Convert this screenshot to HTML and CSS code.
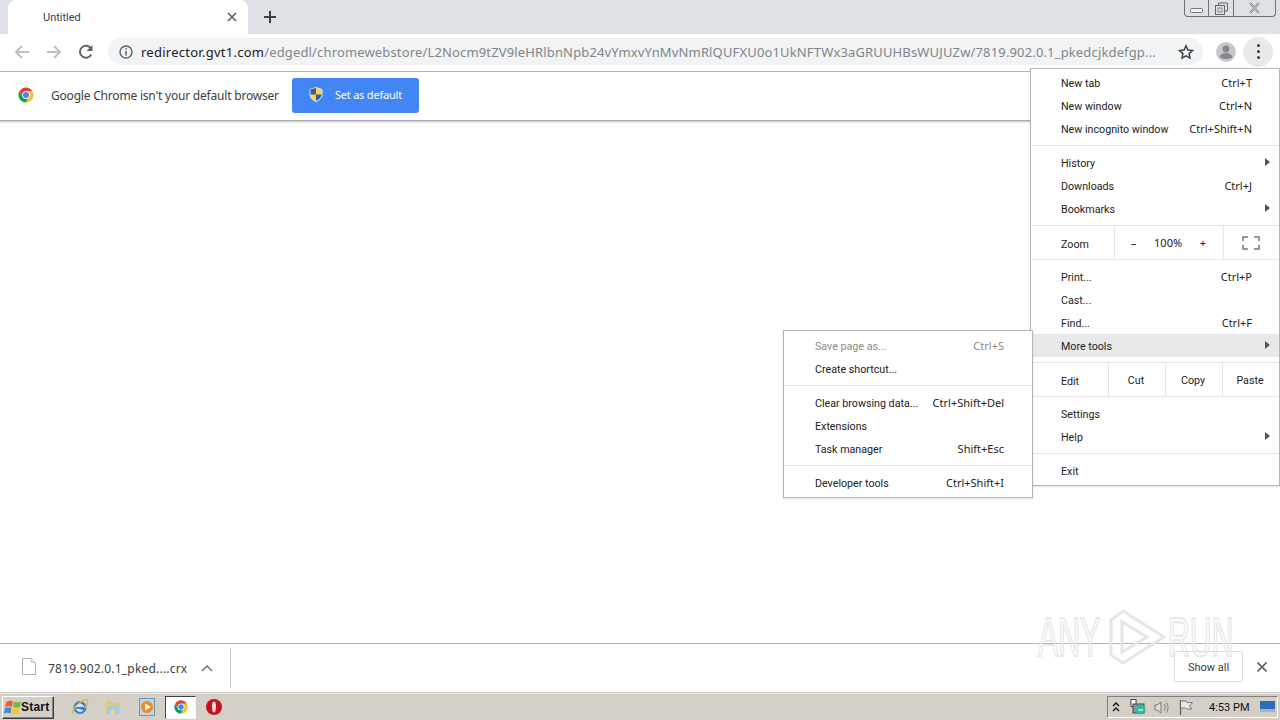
FILE: index.html
```html
<!DOCTYPE html>
<html lang="en">
<head>
<meta charset="utf-8">
<title>Untitled</title>
<link rel="stylesheet" href="styles.css">
</head>
<body>
<svg class="defs" width="0" height="0" aria-hidden="true">
  <symbol id="chrome" viewBox="0 0 48 48">
    <path fill="#db4437" d="M6.680 14A20 20 0 0 1 41.320 14H24A10 10 0 0 0 15.340 29z"/>
    <path fill="#0f9d58" d="M24 44A20 20 0 0 1 6.680 14L15.340 29A10 10 0 0 0 32.660 29z"/>
    <path fill="#fbc02d" d="M41.320 14A20 20 0 0 1 24 44L32.660 29A10 10 0 0 0 24 14z"/>
    <circle cx="24" cy="24" r="10" fill="#fff"/>
    <circle cx="24" cy="24" r="8" fill="#4285f4"/>
  </symbol>
</svg>
<div class="screen">
  <header class="tabstrip">
    <div class="tab">
      <span class="tab-title">Untitled</span>
      <svg class="tab-close" width="10" height="10" viewBox="0 0 10 10"><path d="M1 1l8 8M9 1l-8 8" stroke="#5f6368" stroke-width="1.700" fill="none"/></svg>
    </div>
    <svg class="new-tab" width="14" height="14" viewBox="0 0 14 14"><path d="M7 1v12M1 7h12" stroke="#3c4043" stroke-width="2" fill="none"/></svg>
    <div class="winctl">
      <span class="winbtn win-min"><svg width="13" height="5" viewBox="0 0 13 5"><rect x="0.500" y="0.500" width="12" height="4" rx="1" fill="#eef0f3" stroke="#777"/></svg></span>
      <span class="winbtn win-max"><svg width="13" height="13" viewBox="0 0 13 13"><path d="M3.500 3V1h9v8h-2.500" fill="none" stroke="#666"/><rect x="0.500" y="3.500" width="9" height="9" fill="none" stroke="#666"/><rect x="3" y="6" width="4" height="4" fill="none" stroke="#888"/></svg></span>
      <span class="winbtn win-close"><svg width="13" height="12" viewBox="0 0 13 12"><path d="M2 1l9 10M11 1L2 11" stroke="#888" stroke-width="2.400" fill="none"/><path d="M2 1l9 10M11 1L2 11" stroke="#e8eaed" stroke-width="0.800" fill="none"/></svg></span>
    </div>
  </header>

  <nav class="toolbar">
    <svg class="tool-icon" width="16" height="16" viewBox="0 0 16 16"><path d="M15 8H2M8 2L2 8l6 6" stroke="#bdc1c6" stroke-width="2" fill="none"/></svg>
    <svg class="tool-icon" width="16" height="16" viewBox="0 0 16 16"><path d="M1 8h13M8 2l6 6-6 6" stroke="#bdc1c6" stroke-width="2" fill="none"/></svg>
    <svg class="tool-icon" width="16" height="16" viewBox="0 0 16 16"><path d="M13.300 10.500A6 6 0 1 1 13 4.500" stroke="#5f6368" stroke-width="2" fill="none"/><path d="M14.500 1v6h-6z" fill="#5f6368"/></svg>
    <div class="omnibox">
      <svg class="info" width="14" height="14" viewBox="0 0 14 14"><circle cx="7" cy="7" r="6" fill="none" stroke="#5f6368" stroke-width="1.400"/><path d="M7 6v4.500M7 3.300v1.500" stroke="#5f6368" stroke-width="1.500"/></svg>
      <div class="url"><span class="host">redirector.gvt1.com</span>/edgedl/chromewebstore/L2Nocm9tZV9leHRlbnNpb24vYmxvYnMvNmRlQUFXU0o1UkNFTWx3aGRUUHBsWUJUZw/7819.902.0.1_pkedcjkdefgp...</div>
      <svg class="star" width="16" height="16" viewBox="0 0 16 16"><path d="M8 1.800l1.900 4.200 4.600.5-3.400 3.100.9 4.500L8 11.800l-4 2.300.9-4.500-3.400-3.100 4.600-.5z" fill="none" stroke="#3c4043" stroke-width="1.500"/></svg>
    </div>
    <svg class="avatar" width="20" height="20" viewBox="0 0 20 20"><circle cx="10" cy="10" r="10" fill="#c6c8cb"/><circle cx="10" cy="7" r="3.400" fill="#84878b"/><path d="M3.500 15c1-3 4-4 6.500-4s5.500 1 6.500 4c-1.500 1.500-4 2-6.500 2s-5-.5-6.500-2z" fill="#84878b"/></svg>
    <div class="menu-btn"><i></i><i></i><i></i></div>
  </nav>

  <section class="infobar">
    <svg class="info-logo" width="18" height="18"><use href="#chrome"/></svg>
    <span class="info-text">Google Chrome isn't your default browser</span>
    <button class="default-btn">
      <svg width="14" height="15" viewBox="0 0 14 15"><path d="M7 0.500l6 2v5c0 3.500-3 5.800-6 7-3-1.200-6-3.500-6-7v-5z" fill="#ffd23f" stroke="#dfe8f7"/><path d="M7 1v6.500H1.500v-5zM7 7.500h5.500c0 3-2.700 5.200-5.500 6.400z" fill="#2a5fb0"/></svg>
      <span>Set as default</span>
    </button>
  </section>

  <main class="content"></main>

  <section class="downloads">
    <div class="dl-item">
      <svg class="dl-file" width="14" height="17" viewBox="0 0 14 17"><path d="M.5.500h9l4 4v12H.5z" fill="#fff" stroke="#aeb1b5"/><path d="M9.500.500v4h4" fill="#eee" stroke="#c6c8ca"/></svg>
      <span class="dl-name">7819.902.0.1_pked....crx</span>
      <svg width="12" height="7" viewBox="0 0 12 7"><path d="M1 6l5-5 5 5" fill="none" stroke="#777" stroke-width="1.600"/></svg>
    </div>
    <button class="show-all">Show all</button>
    <svg class="dl-close" width="10" height="10" viewBox="0 0 10 10"><path d="M0.500.500l9 9M9.500.500l-9 9" stroke="#5f6368" stroke-width="1.600" fill="none"/></svg>
  </section>

  <footer class="taskbar">
    <button class="start">
      <svg width="17" height="15" viewBox="0 0 17 15"><path d="M2 2.500c2-2 5-2 7-1L8 7C6 6 4 6 1 7z" fill="#e8622c"/><path d="M10 1.500c2 1 4 1 7 0l-1 5.500c-3 1-5 1-7 0z" fill="#79b83d"/><path d="M1 8c2-1 4-1 6.500 0l-1 5.500C4 12.500 3 12.500 0 13.500z" fill="#3e8be0"/><path d="M8.500 8c2 1 4 1 7 0l-1 5.500c-3 1-5 1-7 0z" fill="#f8c52c"/></svg>
      <span>Start</span>
    </button>
    <div class="quick">
      <svg class="q-ie" width="18" height="18" viewBox="0 0 18 18"><circle cx="9" cy="9.500" r="6.500" fill="#2f7fd1"/><path d="M5.500 8.600h7c-.5-3.400-6.400-3.400-7 0zM5.500 10.600c.6 3.500 5 3.900 6.800 1.400" fill="#d7ecfb" stroke="#d7ecfb" stroke-width="0.900"/><path d="M3 15.500C.5 15 3 9 7.500 5.500S15 .5 16.300 2c1.500 2-1 6-3 8" fill="none" stroke="#e6b73a" stroke-width="1.500"/></svg>
      <svg class="q-folder" width="16" height="16" viewBox="0 0 16 16"><path d="M1 2h6l1 2h7v11H1z" fill="#e9c867"/><path d="M2 7h12v8H2z" fill="#9fd0e6"/><path d="M6 15v-4h4v4" fill="#e9d896"/></svg>
      <svg class="q-media" width="16" height="18" viewBox="0 0 16 18"><rect x=".5" y=".5" width="15" height="17" fill="#bcd3ea" stroke="#6f97bd"/><circle cx="8" cy="9" r="6" fill="#f08a1d"/><path d="M6 5.500v7l6-3.500z" fill="#fff"/></svg>
      <div class="q-chrome"><svg width="16" height="16"><use href="#chrome"/></svg></div>
      <svg class="q-opera" width="16" height="16" viewBox="0 0 16 16"><circle cx="8" cy="8" r="8" fill="#c2121a"/><ellipse cx="8" cy="8" rx="2" ry="5.400" fill="#f6dcdc"/></svg>
    </div>
    <div class="tray">
      <svg width="8" height="10" viewBox="0 0 8 10"><path d="M1 4l3-3 3 3M1 9l3-3 3 3" fill="none" stroke="#111" stroke-width="1.400"/></svg>
      <svg class="t-net" width="16" height="16" viewBox="0 0 16 16"><rect x="1" y="0.500" width="5" height="7" fill="#fff" stroke="#444"/><rect x="3" y="5" width="11" height="9" fill="#7f9aa8" stroke="#444"/><circle cx="10.500" cy="10.500" r="5" fill="#37b7a0"/><path d="M8 11h5" stroke="#fff"/></svg>
      <svg class="t-vol" width="16" height="15" viewBox="0 0 16 15"><path d="M1 5h2l4-3v11l-4-3H1z" fill="#ddd" stroke="#777"/><path d="M10 4c1.500 2 1.500 5 0 7M12.500 2.500c2 3 2 7 0 10" fill="none" stroke="#777"/></svg>
      <svg class="t-flag" width="16" height="16" viewBox="0 0 16 16"><path d="M2.500 1v15" stroke="#666" stroke-width="1.400"/><path d="M3 2h5l1 1.500h5.500L11.500 7 14 10H8.500L7.500 9H3" fill="#e9e7e1" stroke="#777"/></svg>
      <span class="clock">4:53 PM</span>
      <svg class="t-desk" width="15" height="12" viewBox="0 0 15 12"><rect width="15" height="10" fill="#2e6dbb"/><rect y="8" width="15" height="3" fill="#9cb3c9"/></svg>
    </div>
  </footer>

  <div class="menu menu-main">
    <div class="row"><span>New tab</span><kbd>Ctrl+T</kbd></div>
    <div class="row"><span>New window</span><kbd>Ctrl+N</kbd></div>
    <div class="row"><span>New incognito window</span><kbd>Ctrl+Shift+N</kbd></div>
    <hr>
    <div class="row sub"><span>History</span></div>
    <div class="row"><span>Downloads</span><kbd>Ctrl+J</kbd></div>
    <div class="row sub"><span>Bookmarks</span></div>
    <div class="cells zoom-row">
      <span class="cell-label">Zoom</span>
      <div class="zoom-ctl"><span>&#8211;</span><span>100%</span><span>+</span></div>
      <div class="zoom-full"><svg width="18" height="14" viewBox="0 0 18 14"><path d="M1 5V1h5M12 1h5v4M17 9v4h-5M6 13H1V9" fill="none" stroke="#777" stroke-width="1.500"/></svg></div>
    </div>
    <div class="row first-after"><span>Print...</span><kbd>Ctrl+P</kbd></div>
    <div class="row"><span>Cast...</span></div>
    <div class="row"><span>Find...</span><kbd>Ctrl+F</kbd></div>
    <div class="row sub active"><span>More tools</span></div>
    <div class="cells edit-row">
      <span class="cell-label edit-label">Edit</span>
      <span class="edit-cell">Cut</span><span class="edit-cell">Copy</span><span class="edit-cell">Paste</span>
    </div>
    <div class="row first-after"><span>Settings</span></div>
    <div class="row sub"><span>Help</span></div>
    <hr>
    <div class="row"><span>Exit</span></div>
  </div>

  <div class="menu menu-sub">
    <div class="row disabled"><span>Save page as...</span><kbd>Ctrl+S</kbd></div>
    <div class="row"><span>Create shortcut...</span></div>
    <hr>
    <div class="row"><span>Clear browsing data...</span><kbd>Ctrl+Shift+Del</kbd></div>
    <div class="row"><span>Extensions</span></div>
    <div class="row"><span>Task manager</span><kbd>Shift+Esc</kbd></div>
    <hr>
    <div class="row"><span>Developer tools</span><kbd>Ctrl+Shift+I</kbd></div>
  </div>

  <div class="watermark">
    <span class="wm-text">ANY</span>
    <svg width="58" height="58" viewBox="0 0 58 58"><path d="M3 12L15 3l41 26-41 26-12-8V12zM14 14v30l25-15z" fill="none" stroke="#e6e6e6" stroke-width="3"/></svg>
    <span class="wm-text">RUN</span>
  </div>
</div>
</body>
</html>
```
FILE: styles.css
```css
* { box-sizing: border-box; }
html, body { margin: 0; height: 100%; }
body { font-family: Roboto, "Liberation Sans", sans-serif; font-size: 11px; color: #222; background: #fff; }
.defs { position: absolute; }
.screen { position: relative; width: 1280px; height: 720px; overflow: hidden; display: flex; flex-direction: column; }

.tabstrip { height: 34px; flex: none; background: #dee1e6; display: flex; align-items: flex-start; padding-left: 8px; }
.tab { width: 240px; height: 34px; background: #fff; border-radius: 8px 8px 0 0; display: flex; align-items: center; padding: 0 11px 0 35px; justify-content: space-between; }
.tab-title { font-size: 11px; color: #3c4043; }
.tab-close { display: block; }
.new-tab { margin: 10px 0 0 15px; }
.winctl { margin-left: auto; margin-right: 4px; width: 92px; height: 17px; border: 1px solid #6f7378; border-top: 0; border-radius: 0 0 4px 4px; display: flex; }
.winbtn { display: flex; align-items: center; justify-content: center; height: 16px; }
.win-min { width: 24px; border-right: 1px solid #6f7378; padding-top: 5px; }
.win-max { width: 25px; border-right: 1px solid #6f7378; }
.win-close { flex: 1; }

.toolbar { height: 38px; flex: none; background: #fff; border-bottom: 1px solid #b4b6b8; display: flex; align-items: center; padding: 0 7px 2px 14px; }
.tool-icon { margin-right: 16px; flex: none; }
.omnibox { width: 1095px; height: 27px; margin-left: -2px; border-radius: 14px; background: #f1f3f4; display: flex; align-items: center; padding: 0 9px 0 11px; }
.info { flex: none; }
.url { margin-left: 8px; width: 1018px; white-space: nowrap; overflow: hidden; font-family: "Noto Sans", sans-serif; font-size: 13px; color: #80868b; letter-spacing: 0.15px; }
.host { color: #202124; letter-spacing: 0.26px; }
.star { margin-left: auto; flex: none; }
.avatar { margin-left: 13px; flex: none; }
.menu-btn { width: 30px; height: 30px; margin-left: 7px; border-radius: 50%; background: #e8e9ea; display: flex; flex-direction: column; align-items: center; justify-content: center; gap: 3px; flex: none; }
.menu-btn i { width: 3px; height: 3px; border-radius: 50%; background: #3c4043; }

.infobar { height: 49px; flex: none; background: #fff; border-bottom: 1px solid #a9abad; box-shadow: 0 1px 2px rgba(0,0,0,.25); display: flex; align-items: center; padding: 0 0 2px 17px; position: relative; }
.info-logo { flex: none; }
.info-text { margin-left: 16px; font-family: "Noto Sans", sans-serif; font-size: 12px; letter-spacing: -0.2px; color: #3c4043; }
.default-btn { margin-left: 13px; width: 127px; height: 35px; border: 0; border-radius: 3px; background: #4285f4; color: #fff; font-family: "Noto Sans", sans-serif; font-size: 11px; letter-spacing: -0.2px; display: flex; align-items: center; padding: 0 0 2px 17px; gap: 12px; }

.content { flex: 1; background: #fff; }

.downloads { height: 50px; flex: none; border-top: 1px solid #b4b4b4; border-bottom: 1px solid #cfccc5; background: #fff; display: flex; align-items: center; padding: 0 13px 0 22px; }
.dl-item { width: 209px; height: 40px; border-right: 1px solid #c9cacb; display: flex; align-items: center; }
.dl-file { margin-bottom: 3px; }
.dl-name { margin: 0 14px 0 12px; font-family: "Noto Sans", sans-serif; font-size: 12px; letter-spacing: 0.2px; color: #3c4043; }
.show-all { margin-left: auto; margin-bottom: 3px; width: 69px; height: 31px; border: 1px solid #dadce0; border-radius: 3px; background: #fff; font: inherit; color: #3c4043; padding: 2px 0 0; }
.dl-close { margin-left: 14px; margin-bottom: 3px; }

.taskbar { height: 27px; flex: none; background: #d4d0c8; border-top: 1px solid #efece6; display: flex; align-items: center; padding: 0 2px; }
.start { width: 52px; height: 23px; background: #d4d0c8; border: 1px solid; border-color: #fff #404040 #404040 #fff; box-shadow: inset -1px -1px 0 #808080; padding: 0 0 0 1px; display: flex; align-items: center; gap: 0; font: bold 12px "Liberation Sans", sans-serif; letter-spacing: 0.2px; color: #111; }
.quick { display: flex; align-items: center; margin-left: 17px; }
.q-folder { margin-left: 16px; }
.q-media { margin-left: 18px; }
.q-chrome { margin-left: 10px; width: 31px; height: 23px; background: #fff; border: 1px solid; border-color: #404040 #f5f5f5 #f5f5f5 #404040; display: flex; align-items: center; justify-content: center; }
.q-opera { margin-left: 10px; }
.tray { margin-left: auto; width: 171px; height: 22px; border: 1px solid; border-color: #808080 #fff #fff #808080; display: flex; align-items: center; padding: 0 2px 0 4px; }
.t-net { margin-left: 10px; }
.t-vol { margin-left: 8px; }
.t-flag { margin-left: 8px; }
.clock { margin-left: 15px; font-size: 11px; color: #111; }
.t-desk { margin-left: auto; }

.menu { position: absolute; background: #fff; border: 1px solid #b4b6b8; padding: 2px 0 2px; box-shadow: 0 1px 2px rgba(0,0,0,.12); font-size: 10.700px; }
.menu-main { left: 1030px; top: 68px; width: 250px; height: 418px; }
.menu-main .row { padding-right: 27px; }
.menu-sub { left: 783px; top: 330px; width: 250px; height: 168px; padding-top: 3px; z-index: 2; }
.menu-sub .row { padding-left: 31px; }
.row { height: 23px; padding: 0 28px 0 30px; display: flex; align-items: center; justify-content: space-between; position: relative; white-space: nowrap; }
.row > span { padding-top: 2px; }
.row kbd { font-family: "Noto Sans", sans-serif; font-size: 11px; }
.row.sub::after { content: ""; position: absolute; right: 9px; top: 7px; border-left: 5px solid #555; border-top: 4.500px solid transparent; border-bottom: 4.500px solid transparent; }
.row.active { background: #e8e9eb; }
.row.disabled { color: #8b8b8b; }
hr { border: 0; border-top: 1px solid #e5e5e5; margin: 5px 0; height: 0; }
.cells { display: flex; align-items: center; border-top: 1px solid #e5e5e5; border-bottom: 1px solid #e5e5e5; height: 35px; margin-top: 5px; }
.cell-label { padding: 3px 0 0 30px; width: 83px; height: 33px; display: flex; align-items: center; }
.zoom-ctl { width: 109px; height: 33px; border-left: 1px solid #e5e5e5; display: flex; align-items: center; justify-content: space-around; padding: 0 8px 0 7px; font-family: "Noto Sans", sans-serif; font-size: 11px; }
.zoom-full { flex: 1; height: 33px; border-left: 1px solid #e5e5e5; display: flex; align-items: center; justify-content: center; padding-right: 2px; }
.first-after { margin-top: 5px; }
.edit-label { width: 77px; }
.edit-cell { width: 57px; height: 33px; border-left: 1px solid #e5e5e5; display: flex; align-items: center; justify-content: center; padding: 2px 2px 0 0; }

.watermark { position: absolute; left: 1038px; top: 608px; display: flex; align-items: center; pointer-events: none; }
.watermark svg { margin: 0 2px 0 6px; flex: none; }
.wm-text { display: block; width: 64px; font: 400 56px/1 "Liberation Sans", sans-serif; color: transparent; -webkit-text-stroke: 2px #e8e8e8; transform: scaleX(.54); transform-origin: left center; white-space: nowrap; }
```
